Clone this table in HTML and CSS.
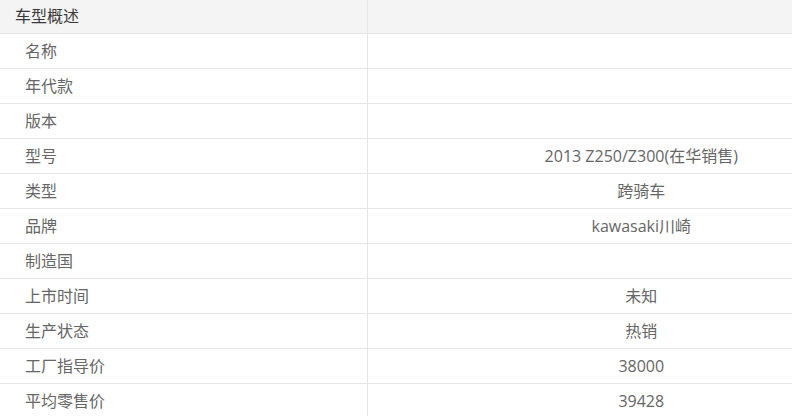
FILE: index.html
```html
<!DOCTYPE html>
<html lang="zh-CN">
<head>
  <meta charset="UTF-8" />
  <title>车型概述</title>
  <link rel="stylesheet" href="styles.css">
</head>
<body>
  <table class="spec">
    <colgroup>
      <col class="col-name">
      <col>
    </colgroup>
    <tr class="spec-head">
      <th>车型概述</th>
      <th></th>
    </tr>
    <tr><td>名称</td><td></td></tr>
    <tr><td>年代款</td><td></td></tr>
    <tr><td>版本</td><td></td></tr>
    <tr><td>型号</td><td>2013 Z250/Z300(在华销售)</td></tr>
    <tr><td>类型</td><td>跨骑车</td></tr>
    <tr><td>品牌</td><td>kawasaki川崎</td></tr>
    <tr><td>制造国</td><td></td></tr>
    <tr><td>上市时间</td><td>未知</td></tr>
    <tr><td>生产状态</td><td>热销</td></tr>
    <tr><td>工厂指导价</td><td>38000</td></tr>
    <tr><td>平均零售价</td><td>39428</td></tr>
  </table>
</body>
</html>
```

FILE: styles.css
```css
body {
  margin: 0;
  font-family: "Open Sans", "Noto Sans CJK SC", sans-serif;
  font-size: 16px;
  color: #666;
  background: #fff;
}
.spec {
  width: 100%;
  border-collapse: collapse;
  table-layout: fixed;
}
.col-name {
  width: 367px;
}
.spec th,
.spec td {
  box-sizing: border-box;
  height: 35px;
  padding: 0;
  border-bottom: 1px solid #e6e6e6;
  vertical-align: middle;
  font-weight: normal;
  line-height: 20px;
}
.spec th:first-child,
.spec td:first-child {
  border-right: 1px solid #e6e6e6;
  text-align: left;
}
.spec-head th {
  height: 33px;
  background: #f4f4f4;
  color: #3a3a3a;
}
.spec-head th:first-child {
  padding-left: 15px;
}
.spec td:first-child {
  padding-left: 25px;
}
.spec td:last-child {
  text-align: center;
  padding-left: 123px;
}
```
